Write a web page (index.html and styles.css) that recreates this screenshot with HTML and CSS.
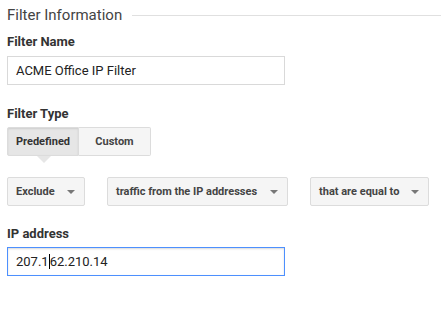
FILE: index.html
```html
<!DOCTYPE html>
<html lang="en">
  <head>
    <meta charset="utf-8" />
    <title>Filter Information</title>
    <link rel="stylesheet" href="styles.css">
  </head>
  <body>
    <fieldset class="filter-info">
      <div class="legend">
        <span class="legend-text">Filter Information</span>
        <span class="legend-rule"></span>
      </div>

      <label class="field-label">Filter Name</label>
      <div class="text-input">ACME Office IP Filter</div>

      <label class="field-label type-label">Filter Type</label>
      <div class="toggle">
        <button class="toggle-btn active">Predefined</button>
        <button class="toggle-btn">Custom</button>
      </div>

      <div class="selects">
        <div class="select sel-exclude">Exclude <span class="arrow"></span></div>
        <div class="select sel-traffic">traffic from the IP addresses <span class="arrow"></span></div>
        <div class="select sel-equal">that are equal to <span class="arrow"></span></div>
      </div>

      <label class="field-label ip-label">IP address</label>
      <div class="text-input focused">207.1<span class="caret"></span>62.210.14</div>
    </fieldset>
  </body>
</html>
```

FILE: styles.css
```css
html,
body {
  margin: 0;
  background: #fff;
  font-family: Roboto, "Liberation Sans", sans-serif;
  color: #333;
}

.filter-info {
  border: 0;
  margin: 0;
  padding: 0 0 0 7px;
}

.legend {
  display: flex;
  align-items: center;
  height: 26px;
  padding-top: 2px;
}

.legend-text {
  font-size: 15px;
  color: #444;
  margin-right: 10px;
}

.legend-rule {
  flex: 1;
  height: 1px;
  background: #e0e0e0;
  margin-top: 1px;
}

.field-label {
  display: block;
  font-size: 13px;
  font-weight: bold;
  color: #333;
  margin-top: 6px;
  height: 16px;
  line-height: 16px;
}

.text-input {
  box-sizing: border-box;
  width: 278px;
  height: 29px;
  margin-top: 6px;
  padding: 0 8px;
  border: 1px solid #d9d9d9;
  font-size: 13px;
  line-height: 27px;
  color: #222;
}

.text-input.focused {
  margin-top: 5px;
  border-color: #4d90fe;
  box-shadow: inset 0 1px 2px rgba(0, 0, 0, 0.15);
}

.caret {
  display: inline-block;
  width: 1px;
  height: 15px;
  background: #000;
  vertical-align: -3px;
}

.type-label {
  margin-top: 21px;
}

.toggle {
  display: flex;
  margin-top: 5px;
  height: 29px;
}

.toggle-btn {
  font-family: inherit;
  font-size: 11px;
  font-weight: bold;
  color: #444;
  background: #f5f5f5;
  border: 1px solid #dcdcdc;
  height: 29px;
  padding: 0;
  position: relative;
}

.toggle-btn:first-child {
  width: 72px;
  border-radius: 2px 0 0 2px;
}

.toggle-btn:last-child {
  width: 72px;
  border-left: 0;
  border-radius: 0 2px 2px 0;
}

.toggle-btn.active {
  background: #e6e6e6;
  color: #333;
  box-shadow: inset 0 1px 2px rgba(0, 0, 0, 0.1);
}

.toggle-btn.active::after {
  content: "";
  position: absolute;
  left: 29px;
  bottom: -8px;
  border-left: 7px solid transparent;
  border-right: 7px solid transparent;
  border-top: 7px solid #e6e6e6;
}

.selects {
  display: flex;
  gap: 22px;
  margin-top: 21px;
}

.select {
  box-sizing: border-box;
  height: 29px;
  display: flex;
  align-items: center;
  justify-content: space-between;
  padding: 0 9px 0 8px;
  background: #f5f5f5;
  border: 1px solid #dcdcdc;
  border-radius: 2px;
  font-size: 11px;
  font-weight: bold;
  color: #444;
}

.sel-exclude {
  width: 78px;
}

.sel-traffic {
  width: 181px;
}

.sel-equal {
  width: 119px;
}

.arrow {
  width: 0;
  height: 0;
  border-left: 4px solid transparent;
  border-right: 4px solid transparent;
  border-top: 4px solid #777;
}

.ip-label {
  margin-top: 20px;
}
```
